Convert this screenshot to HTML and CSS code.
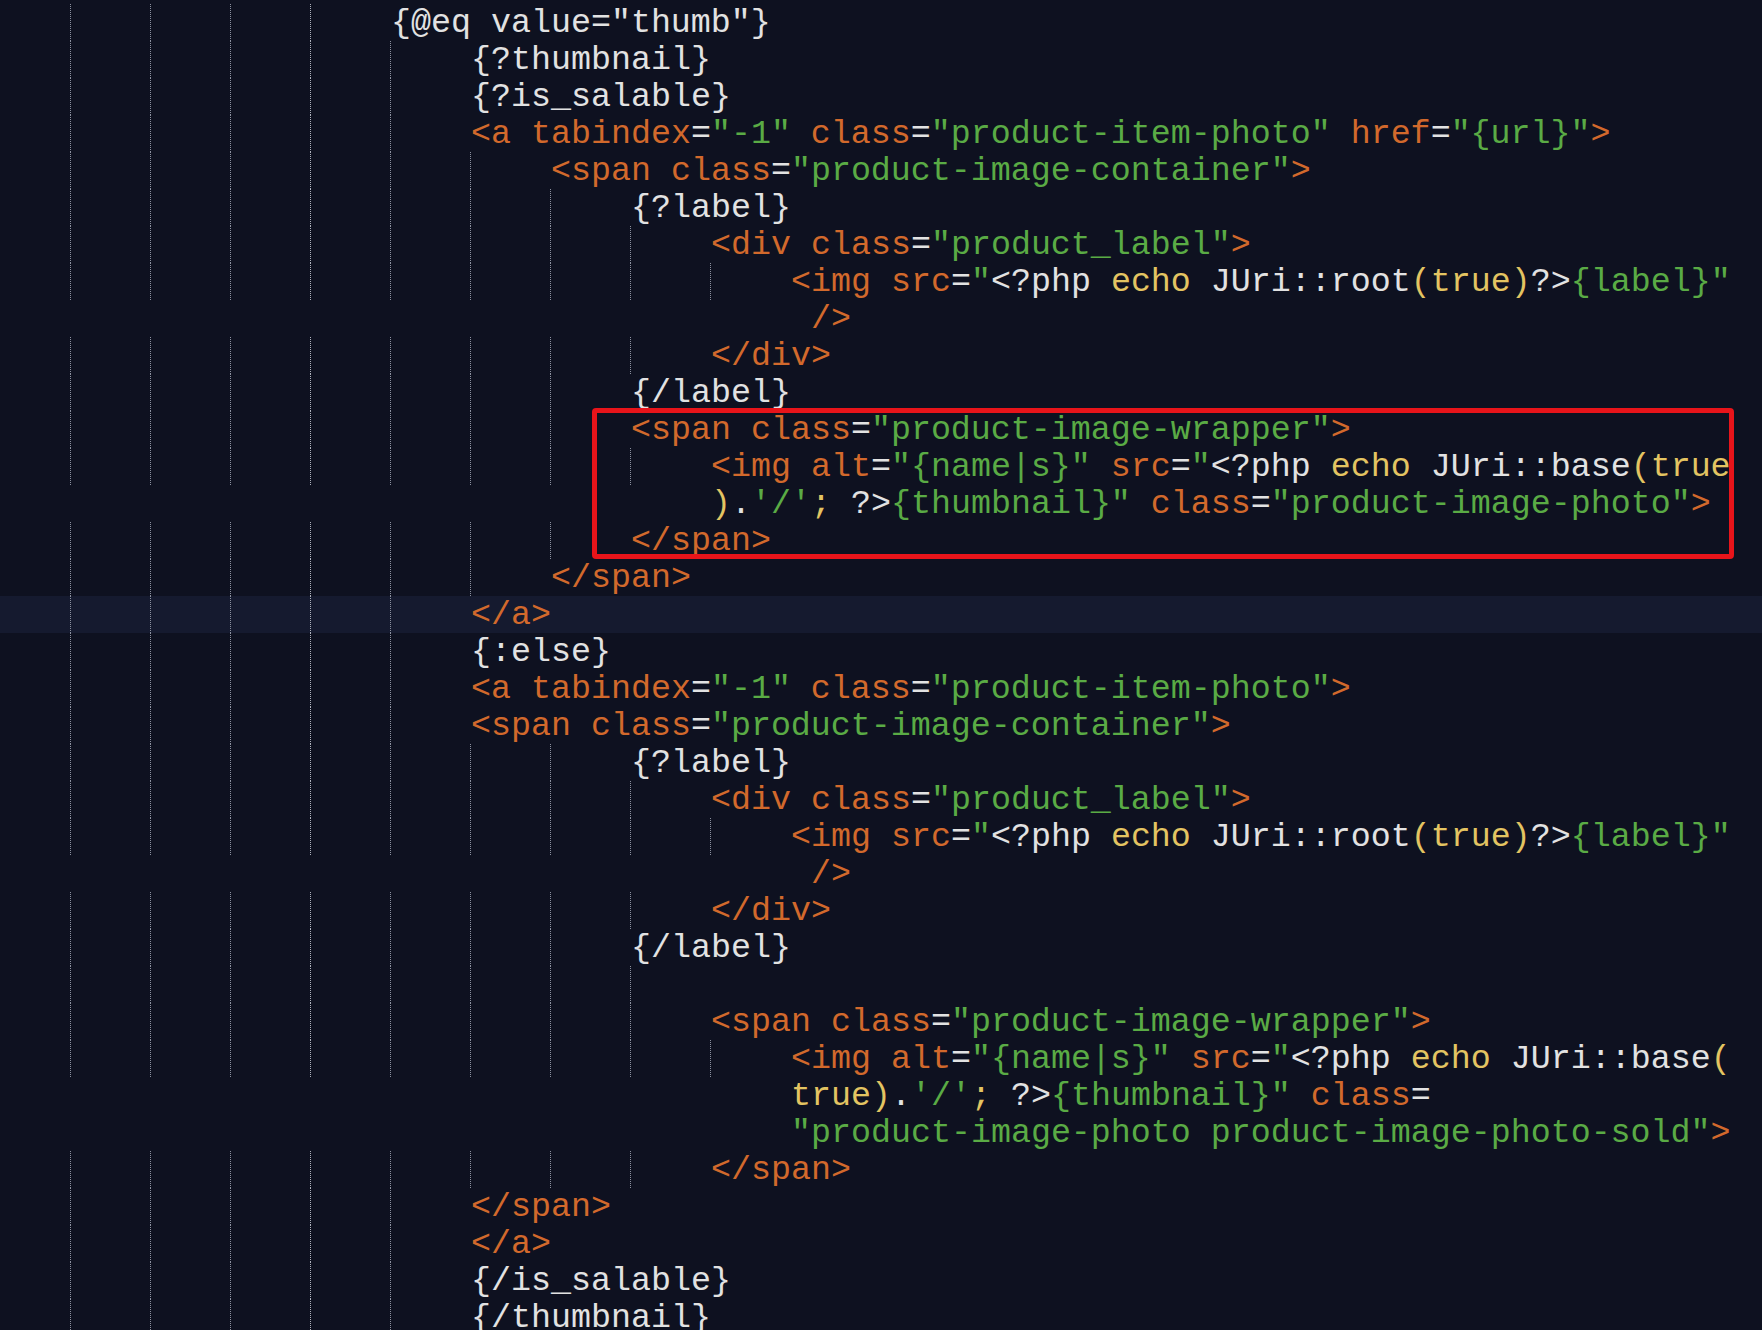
FILE: index.html
```html
<!DOCTYPE html>
<html lang="en">
<head>
    <meta charset="UTF-8">
    <title>template.php</title>
    <link rel="stylesheet" href="styles.css">
</head>
<body>
    <div class="editor">
        <div class="ln"><i class="g"></i><i class="g"></i><i class="g"></i><i class="g"></i><span class="code">{@eq value="thumb"}</span></div>
        <div class="ln"><i class="g"></i><i class="g"></i><i class="g"></i><i class="g"></i><i class="g"></i><span class="code">{?thumbnail}</span></div>
        <div class="ln"><i class="g"></i><i class="g"></i><i class="g"></i><i class="g"></i><i class="g"></i><span class="code">{?is_salable}</span></div>
        <div class="ln"><i class="g"></i><i class="g"></i><i class="g"></i><i class="g"></i><i class="g"></i><span class="code"><span class="t">&lt;a tabindex</span>=<span class="s">"-1"</span><span class="t"> class</span>=<span class="s">"product-item-photo"</span><span class="t"> href</span>=<span class="s">"{url}"</span><span class="t">&gt;</span></span></div>
        <div class="ln"><i class="g"></i><i class="g"></i><i class="g"></i><i class="g"></i><i class="g"></i><i class="g"></i><span class="code"><span class="t">&lt;span class</span>=<span class="s">"product-image-container"</span><span class="t">&gt;</span></span></div>
        <div class="ln"><i class="g"></i><i class="g"></i><i class="g"></i><i class="g"></i><i class="g"></i><i class="g"></i><i class="g"></i><span class="code">{?label}</span></div>
        <div class="ln"><i class="g"></i><i class="g"></i><i class="g"></i><i class="g"></i><i class="g"></i><i class="g"></i><i class="g"></i><i class="g"></i><span class="code"><span class="t">&lt;div class</span>=<span class="s">"product_label"</span><span class="t">&gt;</span></span></div>
        <div class="ln"><i class="g"></i><i class="g"></i><i class="g"></i><i class="g"></i><i class="g"></i><i class="g"></i><i class="g"></i><i class="g"></i><i class="g"></i><span class="code"><span class="t">&lt;img src</span>=<span class="s">"</span>&lt;?php <span class="k">echo</span> JUri::root<span class="k">(true)</span>?&gt;<span class="s">{label}"</span></span></div>
        <div class="ln"><i class="b"></i><i class="b"></i><i class="b"></i><i class="b"></i><i class="b"></i><i class="b"></i><i class="b"></i><i class="b"></i><i class="b"></i><span class="code"><span class="t"> /&gt;</span></span></div>
        <div class="ln"><i class="g"></i><i class="g"></i><i class="g"></i><i class="g"></i><i class="g"></i><i class="g"></i><i class="g"></i><i class="g"></i><span class="code"><span class="t">&lt;/div&gt;</span></span></div>
        <div class="ln"><i class="g"></i><i class="g"></i><i class="g"></i><i class="g"></i><i class="g"></i><i class="g"></i><i class="g"></i><span class="code">{/label}</span></div>

        <div class="mark">
            <div class="ln"><i class="g"></i><i class="g"></i><i class="g"></i><i class="g"></i><i class="g"></i><i class="g"></i><i class="g"></i><span class="code"><span class="t">&lt;span class</span>=<span class="s">"product-image-wrapper"</span><span class="t">&gt;</span></span></div>
            <div class="ln"><i class="g"></i><i class="g"></i><i class="g"></i><i class="g"></i><i class="g"></i><i class="g"></i><i class="g"></i><i class="g"></i><span class="code"><span class="t">&lt;img alt</span>=<span class="s">"{name|s}"</span><span class="t"> src</span>=<span class="s">"</span>&lt;?php <span class="k">echo</span> JUri::base<span class="k">(true</span></span></div>
            <div class="ln"><i class="b"></i><i class="b"></i><i class="b"></i><i class="b"></i><i class="b"></i><i class="b"></i><i class="b"></i><i class="b"></i><span class="code"><span class="k">)</span>.<span class="s">'/'</span><span class="k">;</span> ?&gt;<span class="s">{thumbnail}"</span><span class="t"> class</span>=<span class="s">"product-image-photo"</span><span class="t">&gt;</span></span></div>
            <div class="ln"><i class="g"></i><i class="g"></i><i class="g"></i><i class="g"></i><i class="g"></i><i class="g"></i><i class="g"></i><span class="code"><span class="t">&lt;/span&gt;</span></span></div>
        </div>

        <div class="ln"><i class="g"></i><i class="g"></i><i class="g"></i><i class="g"></i><i class="g"></i><i class="g"></i><span class="code"><span class="t">&lt;/span&gt;</span></span></div>
        <div class="ln current"><i class="g"></i><i class="g"></i><i class="g"></i><i class="g"></i><i class="g"></i><span class="code"><span class="t">&lt;/a&gt;</span></span></div>
        <div class="ln"><i class="g"></i><i class="g"></i><i class="g"></i><i class="g"></i><i class="g"></i><span class="code">{:else}</span></div>
        <div class="ln"><i class="g"></i><i class="g"></i><i class="g"></i><i class="g"></i><i class="g"></i><span class="code"><span class="t">&lt;a tabindex</span>=<span class="s">"-1"</span><span class="t"> class</span>=<span class="s">"product-item-photo"</span><span class="t">&gt;</span></span></div>
        <div class="ln"><i class="g"></i><i class="g"></i><i class="g"></i><i class="g"></i><i class="g"></i><span class="code"><span class="t">&lt;span class</span>=<span class="s">"product-image-container"</span><span class="t">&gt;</span></span></div>
        <div class="ln"><i class="g"></i><i class="g"></i><i class="g"></i><i class="g"></i><i class="g"></i><i class="g"></i><i class="g"></i><span class="code">{?label}</span></div>
        <div class="ln"><i class="g"></i><i class="g"></i><i class="g"></i><i class="g"></i><i class="g"></i><i class="g"></i><i class="g"></i><i class="g"></i><span class="code"><span class="t">&lt;div class</span>=<span class="s">"product_label"</span><span class="t">&gt;</span></span></div>
        <div class="ln"><i class="g"></i><i class="g"></i><i class="g"></i><i class="g"></i><i class="g"></i><i class="g"></i><i class="g"></i><i class="g"></i><i class="g"></i><span class="code"><span class="t">&lt;img src</span>=<span class="s">"</span>&lt;?php <span class="k">echo</span> JUri::root<span class="k">(true)</span>?&gt;<span class="s">{label}"</span></span></div>
        <div class="ln"><i class="b"></i><i class="b"></i><i class="b"></i><i class="b"></i><i class="b"></i><i class="b"></i><i class="b"></i><i class="b"></i><i class="b"></i><span class="code"><span class="t"> /&gt;</span></span></div>
        <div class="ln"><i class="g"></i><i class="g"></i><i class="g"></i><i class="g"></i><i class="g"></i><i class="g"></i><i class="g"></i><i class="g"></i><span class="code"><span class="t">&lt;/div&gt;</span></span></div>
        <div class="ln"><i class="g"></i><i class="g"></i><i class="g"></i><i class="g"></i><i class="g"></i><i class="g"></i><i class="g"></i><span class="code">{/label}</span></div>
        <div class="ln"><i class="g"></i><i class="g"></i><i class="g"></i><i class="g"></i><i class="g"></i><i class="g"></i><i class="g"></i><i class="g"></i></div>
        <div class="ln"><i class="g"></i><i class="g"></i><i class="g"></i><i class="g"></i><i class="g"></i><i class="g"></i><i class="g"></i><i class="g"></i><span class="code"><span class="t">&lt;span class</span>=<span class="s">"product-image-wrapper"</span><span class="t">&gt;</span></span></div>
        <div class="ln"><i class="g"></i><i class="g"></i><i class="g"></i><i class="g"></i><i class="g"></i><i class="g"></i><i class="g"></i><i class="g"></i><i class="g"></i><span class="code"><span class="t">&lt;img alt</span>=<span class="s">"{name|s}"</span><span class="t"> src</span>=<span class="s">"</span>&lt;?php <span class="k">echo</span> JUri::base<span class="k">(</span></span></div>
        <div class="ln"><i class="b"></i><i class="b"></i><i class="b"></i><i class="b"></i><i class="b"></i><i class="b"></i><i class="b"></i><i class="b"></i><i class="b"></i><span class="code"><span class="k">true)</span>.<span class="s">'/'</span><span class="k">;</span> ?&gt;<span class="s">{thumbnail}"</span><span class="t"> class</span>=</span></div>
        <div class="ln"><i class="b"></i><i class="b"></i><i class="b"></i><i class="b"></i><i class="b"></i><i class="b"></i><i class="b"></i><i class="b"></i><i class="b"></i><span class="code"><span class="s">"product-image-photo product-image-photo-sold"</span><span class="t">&gt;</span></span></div>
        <div class="ln"><i class="g"></i><i class="g"></i><i class="g"></i><i class="g"></i><i class="g"></i><i class="g"></i><i class="g"></i><i class="g"></i><span class="code"><span class="t">&lt;/span&gt;</span></span></div>
        <div class="ln"><i class="g"></i><i class="g"></i><i class="g"></i><i class="g"></i><i class="g"></i><span class="code"><span class="t">&lt;/span&gt;</span></span></div>
        <div class="ln"><i class="g"></i><i class="g"></i><i class="g"></i><i class="g"></i><i class="g"></i><span class="code"><span class="t">&lt;/a&gt;</span></span></div>
        <div class="ln"><i class="g"></i><i class="g"></i><i class="g"></i><i class="g"></i><i class="g"></i><span class="code">{/is_salable}</span></div>
        <div class="ln"><i class="g"></i><i class="g"></i><i class="g"></i><i class="g"></i><i class="g"></i><span class="code">{/thumbnail}</span></div>
    </div>
</body>
</html>
```

FILE: styles.css
```css
* {
    box-sizing: border-box;
    margin: 0;
    padding: 0;
}

html,
body {
    height: 100%;
    overflow: hidden;
    background-color: #0e1120;
}

body {
    padding-top: 4px;
}

.editor {
    font-family: 'Liberation Mono', 'DejaVu Sans Mono', monospace;
    font-size: 33.328px;
    line-height: 37px;
    color: #e2e2e2;
}

.ln {
    display: flex;
    height: 37px;
    padding-left: 70px;
    white-space: pre;
}

.ln.current {
    background-color: #151a2f;
}

/* indent guides, one per tab stop (4 chars) */
.g,
.b {
    flex: 0 0 80px;
    height: 37px;
}

.g {
    border-left: 1px dotted #8c91a0;
}

.g:nth-child(4) {
    border-left-color: #aeb2bd;
}

.code {
    padding: 1px 0 0 1px;
    line-height: 36px;
    white-space: pre;
}

.t {
    color: #d2692c;
}

.s {
    color: #5aab45;
}

.k {
    color: #e3c462;
}

/* red highlight around the wrapper block */
.mark {
    position: relative;
}

.mark::after {
    content: "";
    position: absolute;
    left: 592px;
    right: 28px;
    top: -3px;
    bottom: 0;
    border: 5px solid #e8141a;
    border-radius: 4px;
    pointer-events: none;
}
```
